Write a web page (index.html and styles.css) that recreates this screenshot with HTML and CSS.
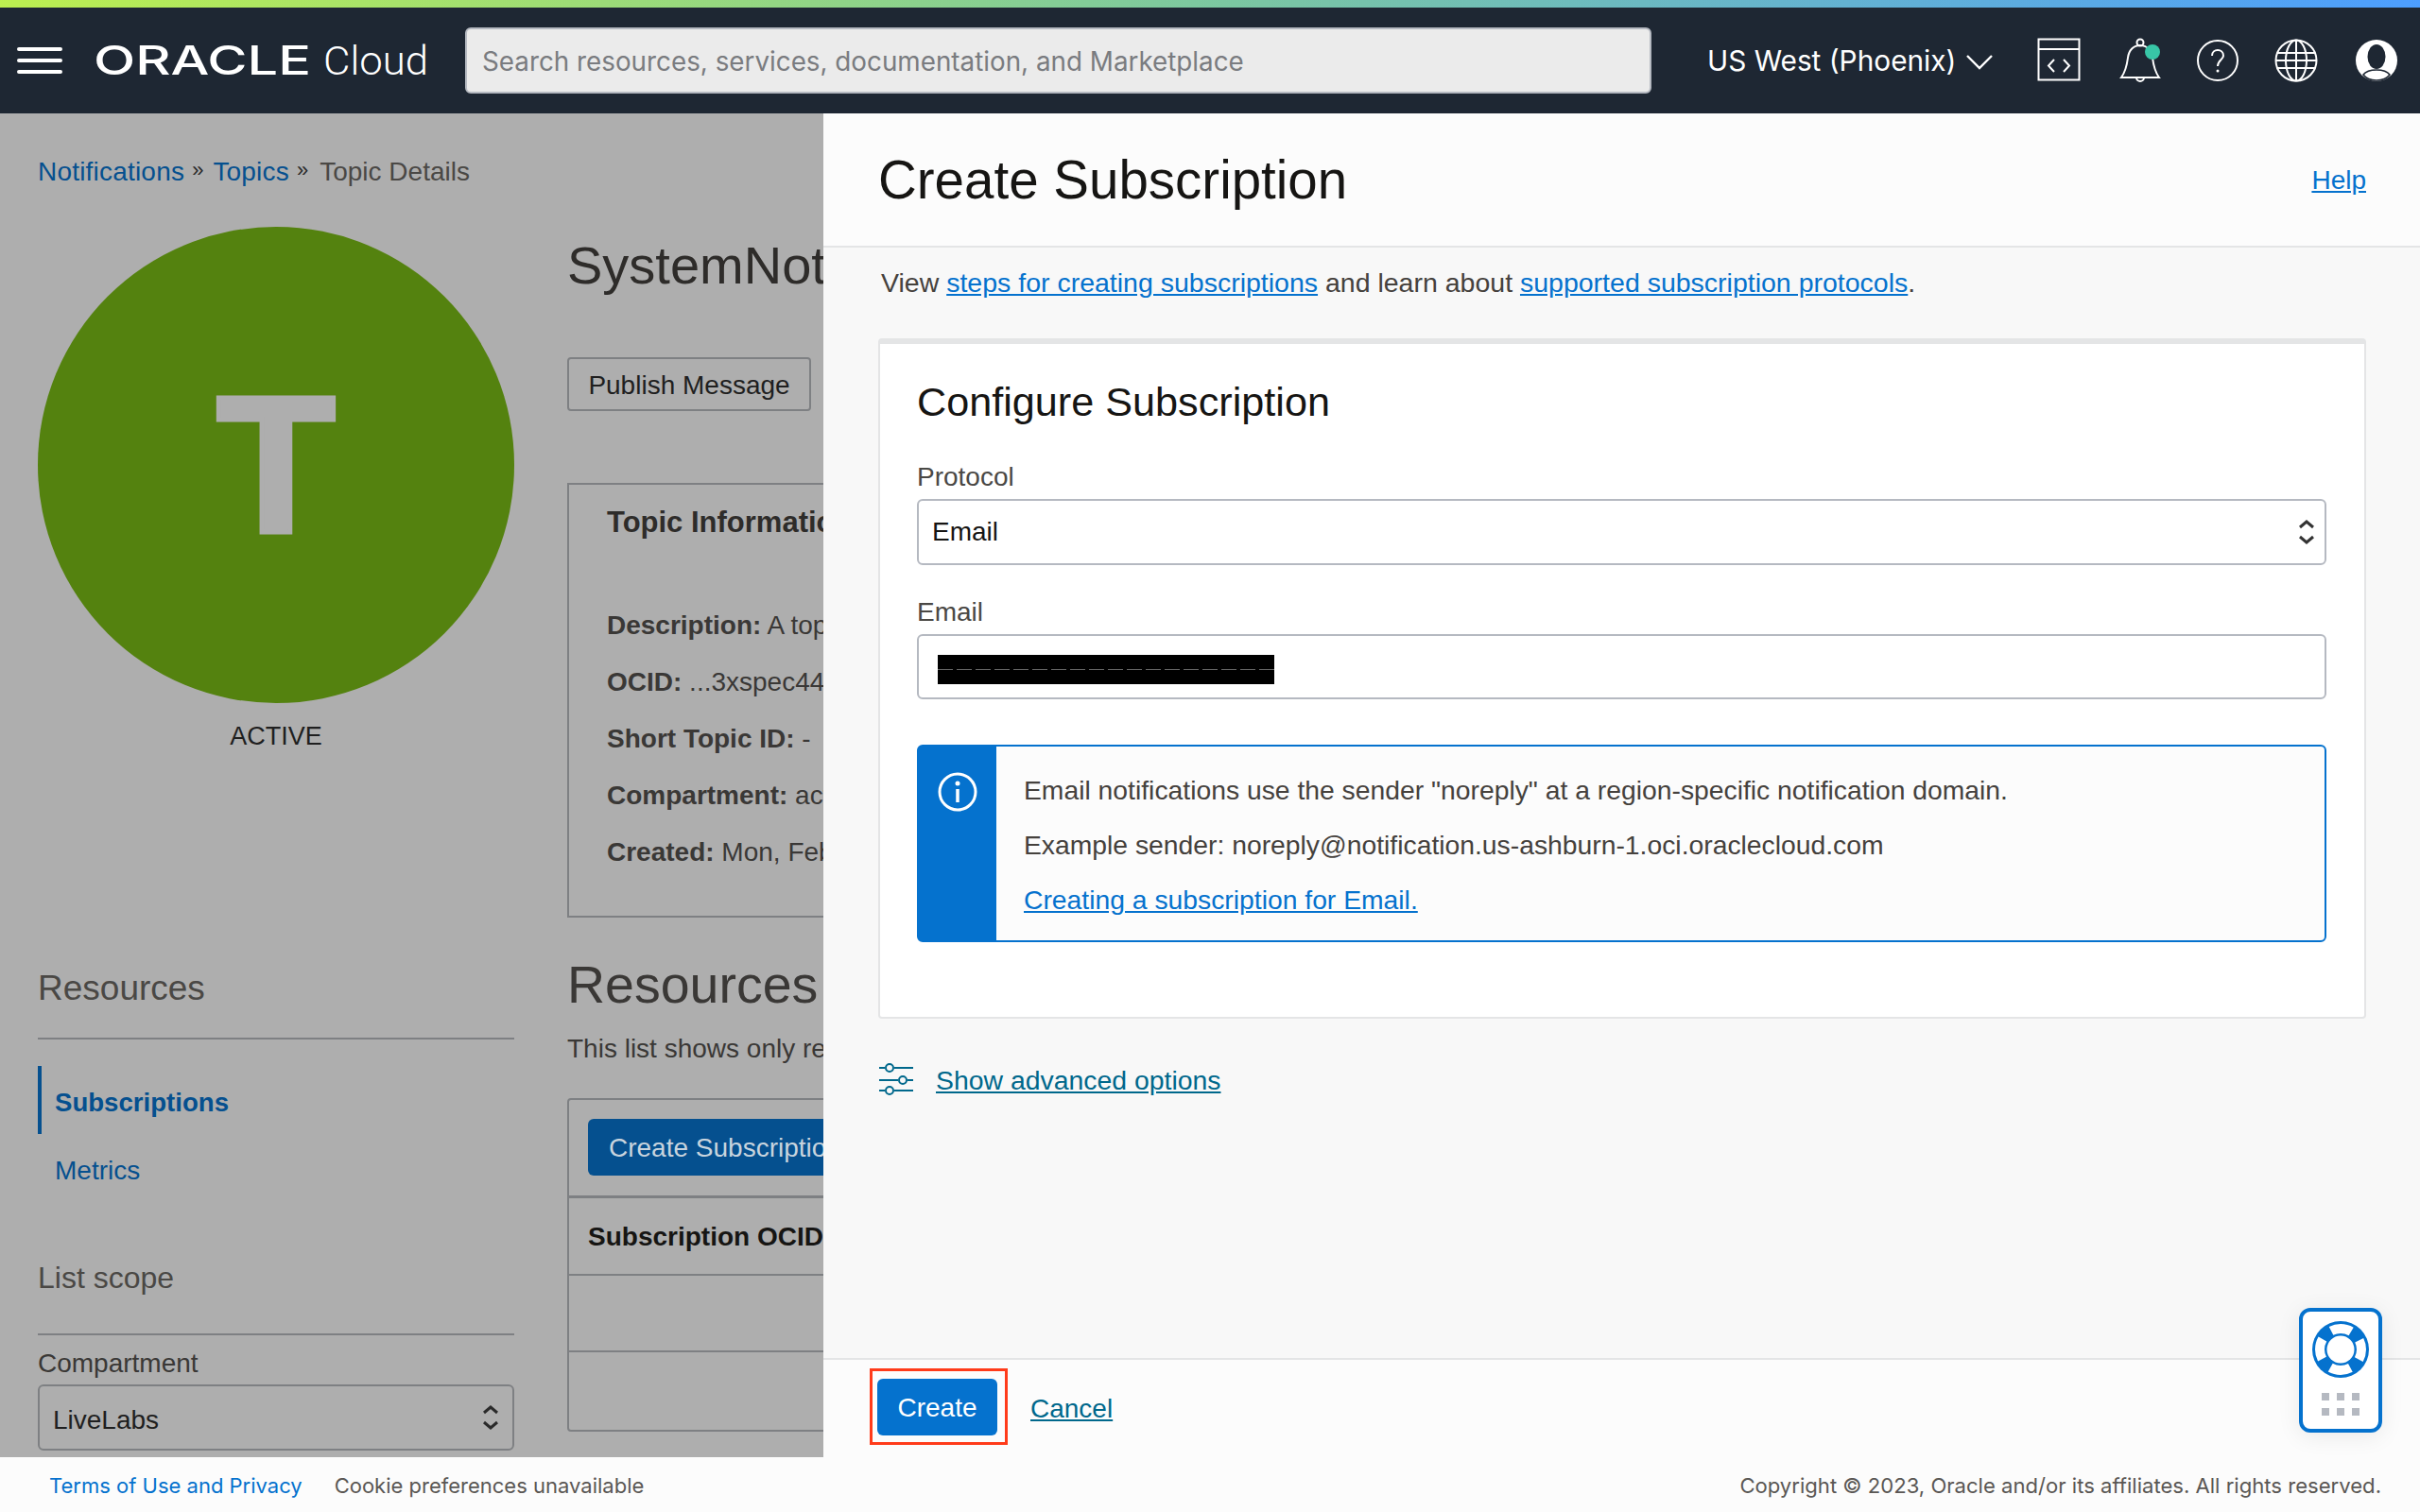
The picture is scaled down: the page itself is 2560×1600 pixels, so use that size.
FILE: index.html
```html
<!DOCTYPE html>
<html lang="en">
<head>
<meta charset="utf-8">
<title>Create Subscription</title>
<link rel="stylesheet" href="styles.css">
</head>
<body>
<div class="stripe"></div>
<header class="header">
  <svg class="burger" width="48" height="28" viewBox="0 0 48 28"><path d="M2 2h44M2 14h44M2 26h44" stroke="#fff" stroke-width="4" stroke-linecap="round"/></svg>
  <svg class="logo" width="356" height="48" viewBox="0 0 356 48" aria-label="Oracle Cloud">
    <text x="0" y="39" class="logo-oracle" textLength="230" lengthAdjust="spacingAndGlyphs">ORACLE</text>
    <text x="243" y="39" class="logo-cloud" textLength="111" lengthAdjust="spacingAndGlyphs">Cloud</text>
  </svg>
  <div class="search">Search resources, services, documentation, and Marketplace</div>
  <div class="region">US West (Phoenix)</div>
  <svg class="chev" width="30" height="17" viewBox="0 0 30 17"><path d="M2 2l13 13L28 2" fill="none" stroke="#fff" stroke-width="2.4"/></svg>
  <svg class="hicon code" width="46" height="46" viewBox="0 0 46 46"><g fill="none" stroke="#fff" stroke-width="2"><rect x="1.500" y="1.500" width="43" height="43"/><path d="M1.500 12h43M18 23l-6 6.500 6 6.500M28 23l6 6.500-6 6.500"/></g></svg>
  <svg class="hicon bell" width="46" height="50" viewBox="0 0 46 50"><g fill="none" stroke="#fff" stroke-width="2"><path d="M2 42c5-7 6-13 7-21 1-8 6-13 13-13s12 5 13 13c1 8 2 14 7 21z"/><circle cx="22" cy="5" r="3.500"/><path d="M18 42a4 4 0 0 0 8 0"/></g><ellipse cx="35" cy="15" rx="8" ry="8" fill="#38c6a7"/></svg>
  <svg class="hicon help" width="46" height="46" viewBox="0 0 46 46"><circle cx="23" cy="23" r="21" fill="none" stroke="#fff" stroke-width="2"/><path d="M17 18c0-4 3-6 6-6s6 2 6 6-6 5-6 11" fill="none" stroke="#fff" stroke-width="2"/><circle cx="23" cy="34" r="1.500" fill="#fff"/></svg>
  <svg class="hicon globe" width="46" height="46" viewBox="0 0 46 46"><g fill="none" stroke="#fff" stroke-width="2"><circle cx="23" cy="23" r="21.500"/><ellipse cx="23" cy="23" rx="11" ry="21.500"/><path d="M23 1.500v43M3 15h40M1.500 23h43M3 31h40"/></g></svg>
  <svg class="hicon user" width="46" height="46" viewBox="0 0 46 46"><circle cx="23" cy="23" r="22" fill="#fff"/><ellipse cx="23" cy="19" rx="9.500" ry="13" fill="#1e2733"/><path d="M9 38c3-4 9-5 14-5s11 1 14 5c-3 4-9 6-14 6s-11-2-14-6z" fill="#fff" stroke="#1e2733" stroke-width="1.500"/></svg>
</header>

<main class="main">
  <div class="page">
    <nav class="crumbs"><a class="dim-link">Notifications</a><span class="sep">»</span><a class="dim-link">Topics</a><span class="sep">»</span><span class="crumb-now">Topic Details</span></nav>
    <div class="columns">
      <aside class="side">
        <div class="badge"><span class="badge-t">T</span></div>
        <div class="state">ACTIVE</div>
        <h3 class="side-h">Resources</h3>
        <ul class="side-nav">
          <li class="side-item active">Subscriptions</li>
          <li class="side-item">Metrics</li>
        </ul>
        <h3 class="side-h2">List scope</h3>
        <div class="side-label">Compartment</div>
        <div class="dim-select"><span class="select-value">LiveLabs</span>
          <svg class="updown" width="18" height="28" viewBox="0 0 18 28"><path d="M2 9l7-6 7 6M2 19l7 6 7-6" fill="none" stroke="#2a2a2a" stroke-width="3"/></svg>
        </div>
      </aside>
      <section class="content">
        <h1 class="title">SystemNoti</h1>
        <button class="dim-btn">Publish Message</button>
        <div class="info-card">
          <h4 class="info-title">Topic Informatio</h4>
          <div class="info-row"><b>Description:</b> A topi</div>
          <div class="info-row"><b>OCID:</b> ...3xspec44</div>
          <div class="info-row"><b>Short Topic ID:</b> -</div>
          <div class="info-row"><b>Compartment:</b> act</div>
          <div class="info-row"><b>Created:</b> Mon, Feb</div>
        </div>
        <h2 class="res-title">Resources</h2>
        <p class="res-note">This list shows only res</p>
        <div class="table">
          <div class="toolbar"><button class="dim-primary">Create Subscription</button></div>
          <div class="th">Subscription OCID</div>
          <div class="tr"></div>
          <div class="tr last"></div>
        </div>
      </section>
    </div>
  </div>

  <div class="panel">
    <div class="panel-head">
      <h2 class="panel-title">Create Subscription</h2>
      <a class="link" href="#">Help</a>
    </div>
    <div class="panel-body">
      <p class="intro">View <a class="link" href="#">steps for creating subscriptions</a> and learn about <a class="link" href="#">supported subscription protocols</a>.</p>
      <div class="card">
        <h3 class="card-title">Configure Subscription</h3>
        <div class="label">Protocol</div>
        <div class="field">Email
          <svg class="updown" width="18" height="28" viewBox="0 0 18 28"><path d="M2 9l7-6 7 6M2 19l7 6 7-6" fill="none" stroke="#333" stroke-width="3"/></svg>
        </div>
        <div class="label label-2">Email</div>
        <div class="field field-email"><span class="redact"></span></div>
        <div class="notice">
          <div class="notice-side">
            <svg width="42" height="42" viewBox="0 0 42 42"><circle cx="21" cy="21" r="19" fill="none" stroke="#fff" stroke-width="3"/><circle cx="21" cy="12" r="2.500" fill="#fff"/><path d="M21 18v14" stroke="#fff" stroke-width="3.500"/></svg>
          </div>
          <div class="notice-text">
            <p class="notice-line">Email notifications use the sender "noreply" at a region-specific notification domain.</p>
            <p class="notice-line">Example sender: noreply@notification.us-ashburn-1.oci.oraclecloud.com</p>
            <p class="notice-line"><a class="link" href="#">Creating a subscription for Email.</a></p>
          </div>
        </div>
      </div>
      <div class="advanced">
        <svg width="36" height="36" viewBox="0 0 36 36"><g fill="none" stroke="#00688c" stroke-width="2"><path d="M0 5h6M16 5h20M0 18h20M30 18h6M0 29h6M16 29h20"/><circle cx="11" cy="5" r="4"/><circle cx="25" cy="18" r="4"/><circle cx="11" cy="29" r="4"/></g></svg>
        <a class="teal adv-link" href="#">Show advanced options</a>
      </div>
    </div>
    <div class="panel-foot">
      <div class="mark"><button class="primary">Create</button></div>
      <a class="teal" href="#">Cancel</a>
    </div>
  </div>

  <div class="helper">
    <svg width="60" height="60" viewBox="0 0 60 60">
      <circle cx="30" cy="30" r="30" fill="#0572ce"/>
      <circle cx="30" cy="30" r="22" fill="none" stroke="#fff" stroke-width="10" stroke-dasharray="22 12.560" stroke-dashoffset="11"/>
      <circle cx="30" cy="30" r="14.500" fill="#fff"/>
    </svg>
    <div class="dots"><i></i><i></i><i></i><i></i><i></i><i></i></div>
  </div>
</main>

<footer class="footer">
  <a class="foot-link" href="#">Terms of Use and Privacy</a>
  <span class="foot-text">Cookie preferences unavailable</span>
  <span class="foot-copy">Copyright © 2023, Oracle and/or its affiliates. All rights reserved.</span>
</footer>
</body>
</html>
```

FILE: styles.css
```css
* { box-sizing: border-box; }
html, body { margin: 0; height: 100%; }
body {
  width: 2560px;
  height: 1600px;
  overflow: hidden;
  display: flex;
  flex-direction: column;
  font-family: "Liberation Sans", Arial, sans-serif;
  font-size: 28px;
  line-height: 36px;
  color: #45413d;
}
h1, h2, h3, h4, p, ul { margin: 0; padding: 0; font-weight: 400; }
ul { list-style: none; }

.stripe { height: 8px; flex: none; background: linear-gradient(90deg, #bcef50 0%, #7cc8a0 50%, #4d9eff 100%); }

.header {
  height: 112px;
  flex: none;
  display: flex;
  align-items: center;
  background: #1e2733;
  color: #fff;
  padding-left: 18px;
}
.burger { flex: none; margin-top: -1px; }
.logo { flex: none; margin-left: 33px; margin-right: 1px; }
.logo-oracle { font-family: Inter, sans-serif; font-weight: 500; font-size: 42px; fill: #fff; }
.logo-cloud { font-family: Roboto, sans-serif; font-weight: 300; font-size: 42px; fill: #fff; }
.search {
  width: 1255px;
  height: 70px;
  flex: none;
  margin-left: 36px;
  padding-left: 16px;
  background: #ebebeb;
  border: 2px solid #b5b9c1;
  border-radius: 6px;
  color: #7a7c80;
  font-family: Inter, sans-serif;
  font-size: 27.800px;
  line-height: 68px;
  white-space: nowrap;
}
.region { flex: none; margin-left: 59px; font-family: Inter, sans-serif; font-size: 29.800px; white-space: nowrap; }
.chev { flex: none; margin-left: 10px; margin-top: 3px; }
.hicon { flex: none; }
.code { margin-left: 46px; margin-top: -2px; }
.bell { margin-left: 41px; margin-top: 2px; }
.help { margin-left: 35px; }
.globe { margin-left: 37px; }
.user { margin-left: 39px; }

.main {
  position: relative;
  flex: 1;
  min-height: 0;
  overflow: hidden;
  background: #aeaeae;
}
.page { padding: 44px 0 0 40px; }
.crumbs { display: flex; align-items: center; height: 36px; white-space: nowrap; }
.dim-link { color: #05508f; letter-spacing: .2px; }
.sep { color: #2a2a2a; margin: -4px 10px 0 8px; font-size: 22px; }
.crumb-now { color: #4a4845; margin-left: 2px; }

.columns { display: flex; margin-top: 40px; }
.side { width: 504px; margin-right: 56px; flex: none; }
.badge {
  width: 504px;
  height: 504px;
  border-radius: 50%;
  background: #54820f;
  display: flex;
  align-items: center;
  justify-content: center;
}
.badge-t { font-weight: 700; font-size: 206px; line-height: 200px; color: #aeaeae; -webkit-text-stroke: 5px #aeaeae; }
.state { margin-top: 17px; text-align: center; color: #1f1f1f; font-size: 27px; }
.side-h { margin-top: 225px; font-size: 37px; line-height: 48px; color: #4a4845; padding-bottom: 28px; border-bottom: 2px solid #7e8083; }
.side-nav { margin-top: 28px; }
.side-item { height: 72px; line-height: 77px; padding-left: 18px; color: #05508f; }
.side-item.active { font-weight: 700; font-size: 27.600px; border-left: 4px solid #05508f; padding-left: 14px; }
.side-h2 { margin-top: 60px; font-size: 32px; line-height: 40px; color: #4a4845; padding-bottom: 39px; border-bottom: 2px solid #7e8083; }
.side-label { margin-top: 12px; line-height: 36px; color: #3a3836; }
.dim-select {
  height: 70px;
  margin-top: 4px;
  border: 2px solid #7e8083;
  border-radius: 6px;
  padding: 0 14px 0 14px;
  color: #1f1f1f;
  display: flex;
  align-items: center;
  justify-content: space-between;
}
.select-value { padding-top: 5px; }

.content { width: 271px; flex: none; overflow: hidden; white-space: nowrap; }
.title { margin-top: 9px; font-size: 56px; line-height: 64px; color: #2e2c2a; }
.dim-btn {
  display: block;
  margin-top: 65px;
  height: 57px;
  width: 258px;
  padding: 2px 0 0;
  background: transparent;
  border: 2px solid #7e8083;
  border-radius: 4px;
  font: 28px "Liberation Sans", Arial, sans-serif;
  color: #1f1f1f;
}
.info-card {
  margin-top: 76px;
  height: 460px;
  width: 800px;
  border: 2px solid #7e8083;
  padding: 22px 0 0 40px;
}
.info-title { font-size: 31px; line-height: 36px; font-weight: 700; color: #2e2c2a; margin-bottom: 73px; }
.info-row { height: 60px; line-height: 36px; color: #3a3836; }
.info-row b { color: #3a3836; }
.res-title { margin-top: 39px; font-size: 55.500px; line-height: 64px; color: #3a3836; }
.res-note { margin-top: 18px; color: #3a3836; }
.table { margin-top: 34px; width: 800px; height: 353px; border: 2px solid #7e8083; border-radius: 4px; }
.toolbar { height: 104px; padding: 20px; border-bottom: 3px solid #7e8083; }
.dim-primary { display: block; height: 60px; width: 300px; padding: 2px 0 0 22px; text-align: left; white-space: nowrap; background: #05508f; border: 0; border-radius: 6px; font: 28px "Liberation Sans", Arial, sans-serif; color: #c8d4de; }
.th { height: 82px; padding-left: 20px; line-height: 82px; font-weight: 700; color: #161513; border-bottom: 2px solid #7e8083; }
.tr { height: 81px; border-bottom: 2px solid #7e8083; }
.tr.last { border-bottom: 0; }

.panel {
  position: absolute;
  top: 0; bottom: 0; left: 871px; right: 0;
  display: flex;
  flex-direction: column;
  background: #f8f8f8;
}
.panel-head {
  height: 142px;
  flex: none;
  display: flex;
  align-items: center;
  justify-content: space-between;
  padding: 2px 57px 0 58px;
  background: #fcfcfc;
  border-bottom: 2px solid #e4e5e6;
}
.panel-title { font-size: 56.500px; line-height: 64px; color: #161513; }
.link { color: #0572ce; text-decoration: underline; }
.panel-body { flex: 1; min-height: 0; padding: 19px 57px 0 58px; }
.intro { padding-left: 3px; font-size: 28.500px; }
.card {
  height: 720px;
  margin-top: 41px;
  background: #fff;
  border: 2px solid #e4e5e6;
  border-top-width: 6px;
  border-radius: 4px;
  padding: 0 40px 0 39px;
}
.card-title { margin-top: 34px; font-size: 43.200px; line-height: 54px; color: #161513; }
.label { margin-top: 35px; height: 36px; color: #4a4845; }
.label-2 { margin-top: 32px; }
.field {
  height: 70px;
  margin-top: 5px;
  border: 2px solid #b5b9c1;
  border-radius: 6px;
  padding: 0 10px 0 14px;
  display: flex;
  align-items: center;
  justify-content: space-between;
  color: #161513;
}
.field-email { height: 69px; padding-left: 20px; justify-content: flex-start; }
.redact { display: block; width: 356px; height: 31px; margin-top: 6px; background: repeating-linear-gradient(90deg, #666 0 16px, #000 16px 20px) center / 100% 1px no-repeat, #000; }
.updown { flex: none; }
.notice {
  display: flex;
  height: 209px;
  margin-top: 48px;
  border: 2px solid #0572ce;
  border-radius: 6px;
  background: #fcfcfc;
}
.notice-side { width: 82px; flex: none; background: #0572ce; padding: 27px 0 0 20px; }
.notice-text { padding: 28px 0 0 29px; }
.notice-line { height: 58px; font-size: 28.300px; white-space: nowrap; }
.advanced { display: flex; align-items: center; gap: 24px; margin-top: 47px; height: 36px; padding-left: 1px; }
.adv-link { font-size: 28.400px; }
.teal { color: #00688c; text-decoration: underline; }
.panel-foot {
  height: 105px;
  flex: none;
  display: flex;
  align-items: center;
  gap: 24px;
  padding-left: 49px;
  background: #fcfcfc;
  border-top: 2px solid #e4e5e6;
}
.mark { padding: 8px 8px 7px 5px; border: 3px solid #ff3b1a; margin-bottom: 4px; }
.primary { display: block; width: 127px; height: 60px; padding: 2px 0 0; background: #0572ce; border: 0; border-radius: 6px; font: 28px "Liberation Sans", Arial, sans-serif; color: #fff; }

.helper {
  position: absolute;
  top: 1264px;
  right: 40px;
  width: 88px;
  height: 132px;
  padding: 10px 10px 0;
  background: #fff;
  border: 4px solid #0572ce;
  border-radius: 12px;
  box-shadow: 0 4px 24px rgba(0,0,0,.08);
}
.helper svg { display: block; }
.dots { display: grid; grid-template-columns: repeat(3, 8px); gap: 8px; margin: 16px 0 0 10px; }
.dots i { height: 8px; background: #b5b9c1; }

.footer {
  height: 58px;
  flex: none;
  display: flex;
  align-items: center;
  padding: 2px 41px 0 52px;
  background: #fcfcfc;
  font-family: Inter, sans-serif;
  font-size: 22px;
  white-space: nowrap;
}
.foot-link { color: #0572ce; text-decoration: none; }
.foot-text { margin-left: 34px; color: #5a5754; }
.foot-copy { margin-left: auto; color: #5a5754; font-size: 22.100px; }
```
